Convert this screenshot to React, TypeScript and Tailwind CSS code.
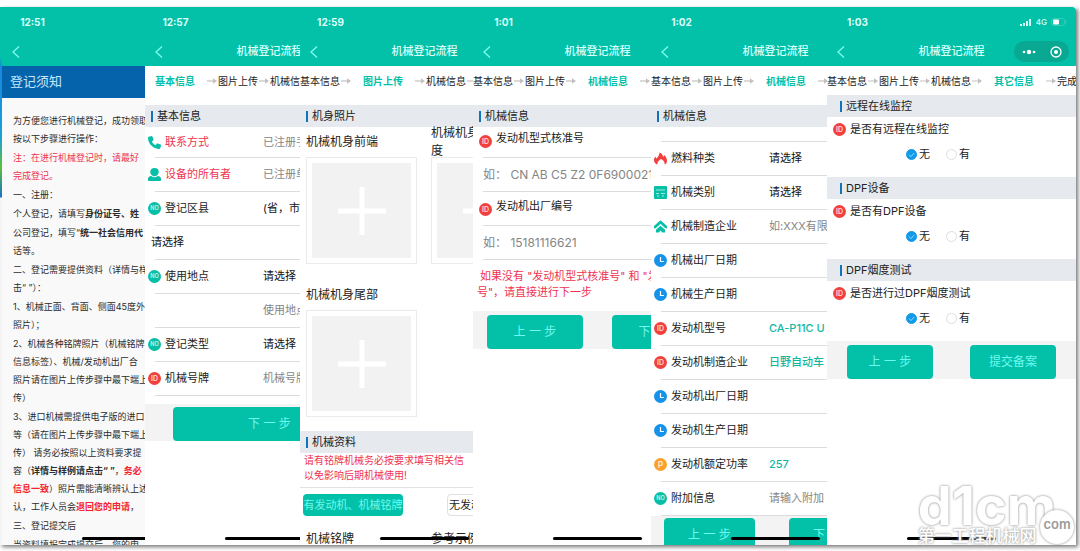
import React, { useId } from "react";

type IconName =
  | "phone"
  | "user"
  | "no"
  | "id"
  | "power"
  | "fire"
  | "card"
  | "house"
  | "clock";

const Badge = ({ fill, text, size }: { fill: string; text: string; size: number }) => (
  <>
    <circle cx="13" cy="13" r="13" fill={fill} />
    <text
      x="13"
      y={13 + size * 0.36}
      fontSize={size}
      fontWeight="600"
      textAnchor="middle"
      fill="#fff"
      fillOpacity="0.8"
    >
      {text}
    </text>
  </>
);

const Icon = ({ name }: { name: IconName }) => (
  <svg viewBox="0 0 26 26" className="size-[13px] shrink-0" aria-hidden="true">
    {name === "no" && <Badge fill="#06bfa6" text="NO" size={11} />}
    {name === "id" && <Badge fill="#f2403f" text="ID" size={14} />}
    {name === "power" && <Badge fill="#f9a12b" text="P" size={17} />}
    {name === "clock" && (
      <>
        <circle cx="13" cy="13" r="13" fill="#1593ea" />
        <path d="M13 6v9h7" fill="none" stroke="#fff" strokeWidth="2.4" />
      </>
    )}
    {name === "phone" && (
      <path
        d="M2 1.500 7 0c1 0 1.600.4 2 1.300l2 5.200c.3.900 0 1.700-.7 2.300L7.800 11c1.700 3.500 3.800 5.600 7.300 7.300l2.300-2.600c.6-.7 1.400-1 2.300-.6l5.200 2c.9.4 1.300 1 1.100 2l-1.300 5c-.2 1-1 1.700-2 1.700C10.500 25.800 0 15.500 0 3.500c0-1 .9-1.800 2-2Z"
        fill="#06bfa6"
      />
    )}
    {name === "user" && (
      <>
        <path
          d="M13 0c5.500 0 8.500 3 8.500 7.500S18 16.500 13 16.500 4.500 12 4.500 7.500 7.500 0 13 0Z"
          fill="#06bfa6"
        />
        <path
          d="M6.500 16c4 3.500 9 3.500 13 0 4 .5 6.500 2.500 6.500 6V24c0 1-.8 2-2 2H2c-1.200 0-2-1-2-2v-2c0-3.500 2.500-5.500 6.500-6Z"
          fill="#06bfa6"
        />
      </>
    )}
    {name === "fire" && (
      <path
        d="M11 1c5 2 7 5 7 9 1.500-1 2-2 2-4 4 3 6 8 6 12 0 4-2 6-5 7 1-4-1-8-7-11-5 3-8 7-7 11-4-1-7-4-7-9 0-3 1.500-5 3-7 .5 2 1 3 2.500 4C8 9 11 6 11 1Z"
        fill="#f2403f"
      />
    )}
    {name === "card" && (
      <>
        <rect width="26" height="26" rx="2" fill="#06bfa6" />
        <path
          d="M4 8h18M4 15h6M14 15h8M6 20h4M16 20h4"
          stroke="#a5f5e8"
          strokeWidth="1.800"
        />
      </>
    )}
    {name === "house" && (
      <>
        <path
          d="M2 14 13 4l11 10"
          fill="none"
          stroke="#06bfa6"
          strokeWidth="5.500"
          strokeLinejoin="round"
          strokeLinecap="round"
        />
        <path d="m4 19.500 9-8 9 8V25h-5.500L13 21l-3.500 4H4Z" fill="#06bfa6" />
      </>
    )}
  </svg>
);

const Capsule = () => (
  <div className="flex h-[21px] w-[55px] items-center justify-between rounded-full bg-[#08a892] pr-[7px] pl-2">
    <svg viewBox="0 0 14 6" className="h-[6px] w-[14px]" aria-hidden="true">
      <circle cx="2" cy="3" r="1.300" fill="#fff" />
      <circle cx="7" cy="3" r="2.200" fill="#fff" />
      <circle cx="12" cy="3" r="1.300" fill="#fff" />
    </svg>
    <svg viewBox="0 0 12 12" className="size-[12px]" aria-hidden="true">
      <circle cx="6" cy="6" r="5" fill="none" stroke="#fff" strokeWidth="1.300" />
      <circle cx="6" cy="6" r="2" fill="#fff" />
    </svg>
  </div>
);

const Signal = () => (
  <div className="flex items-center gap-1 text-[8px] font-medium text-[#d5fff7]">
    <svg viewBox="0 0 12 7" className="h-[7px] w-[12px]" fill="#d5fff7" aria-hidden="true">
      <rect x="0" y="5" width="2" height="2" />
      <rect x="3" y="4" width="2" height="3" />
      <rect x="6" y="2" width="2" height="5" />
      <rect x="9" y="0" width="2" height="7" />
    </svg>
    <span>4G</span>
    <svg viewBox="0 0 16 8" className="h-[8px] w-[16px]" aria-hidden="true">
      <rect x="0.500" y="0.500" width="13" height="7" rx="2" fill="none" stroke="#2fcfb9" />
      <rect x="2" y="1.500" width="6" height="5" rx="1" fill="#fff" />
      <rect x="14.500" y="2.500" width="1" height="3" fill="#2fcfb9" />
    </svg>
  </div>
);

type PhoneProps = {
  time: string;
  title?: string;
  last?: boolean;
  children: React.ReactNode;
};

const Phone = ({ time, title, last, children }: PhoneProps) => (
  <section
    className={`relative min-w-0 overflow-hidden bg-white ${last ? "rounded-tr-sm" : ""}`}
  >
    <div className="relative h-full min-w-[249px]">
      <header className="bg-[#03c1a9]">
        <div className="flex h-[30px] items-center justify-between pr-[9px] pl-[17px]">
          <time className="w-[27px] text-center text-[10px] font-bold text-[#dcfff9]">
            {time}
          </time>
          {last && <Signal />}
        </div>
        <div className="grid h-[29px] grid-cols-[1fr_auto_1fr] items-center px-[7px]">
          <button type="button" aria-label="返回" className="justify-self-start pl-[3px]">
            <svg viewBox="0 0 8 12" className="h-[12px] w-[8px]" aria-hidden="true">
              <path d="M7 .5 1 6l6 5.500" fill="none" stroke="#7ffdf0" strokeWidth="1.300" />
            </svg>
          </button>
          <h1 className="text-[11px] font-medium text-[#dcfff9]">{title}</h1>
          <div className="justify-self-end">{last && <Capsule />}</div>
        </div>
      </header>
      {children}
    </div>
    <div className="absolute bottom-[5px] left-[80px] h-[3px] w-[89px] rounded-full bg-black" />
  </section>
);

const StepArrow = () => (
  <svg viewBox="0 0 12 8" className="h-[8px] w-[12px] shrink-0" aria-hidden="true">
    <path d="M1 4h9" stroke="#c4c0c0" strokeWidth="1.200" />
    <path d="M7 1.200 11 4 7 6.800Z" fill="#c4c0c0" />
  </svg>
);

type StepsProps = { steps: string[]; active: number; short?: boolean };

const Steps = ({ steps, active, short }: StepsProps) => (
  <ol
    className={`flex items-start overflow-hidden pt-[7px] text-[10px] leading-4 whitespace-nowrap text-[#222] ${
      short ? "h-[29px]" : "h-[39px]"
    } ${active === 0 ? "pl-[10px]" : ""}`}
  >
    {steps.map((s, i) => (
      <li key={s} className="flex shrink-0 items-center">
        <span
          className={
            i === active
              ? `font-bold text-[#03c1a9] ${i === 0 ? "pr-[11px]" : "px-[11px]"}`
              : ""
          }
        >
          {s}
        </span>
        {s !== "完成" && <StepArrow />}
      </li>
    ))}
  </ol>
);

const SectionTitle = ({ children, wide }: { children: React.ReactNode; wide?: boolean }) => (
  <h2
    className={`flex h-[22px] items-center gap-1 bg-[#e6e9ed] text-[11px] text-[#222] ${
      wide ? "pl-[13px]" : "pl-[6px]"
    }`}
  >
    <span className="h-[11px] w-[2px] bg-[#1274b8]" />
    {children}
  </h2>
);

const Line = () => <hr className="ml-[10px] border-[#dcdcdc]" />;

type FieldProps = {
  icon?: IconName;
  label?: string;
  red?: boolean;
  option?: string;
  value?: string;
  placeholder?: string;
  first?: boolean;
  name?: string;
};

const Field = ({ icon, label, red, option, value, placeholder, first, name }: FieldProps) => {
  const id = useId();
  return (
    <>
      <div className={`flex items-center pl-[3px] text-[11px] ${first ? "h-[30px]" : "h-[33px]"}`}>
        <div className="flex w-[115px] shrink-0 items-center gap-1">
          {icon && <Icon name={icon} />}
          {label && (
            <label htmlFor={id} className={red ? "text-[#ee3350]" : "text-[#222]"}>
              {label}
            </label>
          )}
        </div>
        {option ? (
          <select id={id} className="min-w-0 flex-1 appearance-none text-[#111]">
            <option>{option}</option>
          </select>
        ) : (
          <input
            id={id}
            aria-label={label ? undefined : name}
            defaultValue={value}
            placeholder={placeholder}
            className="w-full min-w-0 flex-1 font-medium text-[#12b7a2] placeholder:font-normal placeholder:text-[#858585]"
          />
        )}
      </div>
      <Line />
    </>
  );
};

type LongFieldProps = { label: string; placeholder: string; first?: boolean };

const LongField = ({ label, placeholder, first }: LongFieldProps) => {
  const id = useId();
  return (
    <>
      <div className={`flex gap-1 pl-[6px] ${first ? "h-[30px] pt-[3px]" : "h-[33px] pt-[6px]"}`}>
        <div className="pt-[5px]">
          <Icon name="id" />
        </div>
        <label htmlFor={id} className="text-[11px] leading-4 text-[#222]">
          {label}
        </label>
      </div>
      <Line />
      <input
        id={id}
        placeholder={placeholder}
        className="block h-[33px] w-full pl-[10px] text-[12px] placeholder:text-[#858585]"
      />
      <Line />
    </>
  );
};

const Btn = ({ children, className = "" }: { children: React.ReactNode; className?: string }) => (
  <button
    type="button"
    className={`h-[34px] shrink-0 rounded bg-[#03c1a9] text-[12px] text-[#6ff8ee] ${className}`}
  >
    {children}
  </button>
);

const UploadTile = ({ label }: { label: string }) => (
  <div className="w-[111px] shrink-0">
    <div className="flex h-[30px] items-center text-[12px] leading-[18px] whitespace-pre-line text-[#222]">
      <span>{label}</span>
    </div>
    <button
      type="button"
      aria-label={label}
      className="block h-[107px] w-full border border-[#ebebeb] p-[5px]"
    >
      <span className="flex h-full items-center justify-center bg-[#f2f2f2]">
        <svg viewBox="0 0 48 48" className="size-12" aria-hidden="true">
          <path d="M24 0v48M0 24h48" stroke="#fff" strokeWidth="5" />
        </svg>
      </span>
    </button>
  </div>
);

const RadioOption = ({ name, label, checked }: { name: string; label: string; checked?: boolean }) => (
  <label className="flex items-center gap-[2px]">
    <span className="relative size-[11px]">
      <input
        type="radio"
        name={name}
        defaultChecked={checked}
        className="peer block size-[11px] appearance-none rounded-full border border-[#dedede] checked:border-[#129ae6] checked:bg-[#129ae6]"
      />
      <svg
        viewBox="0 0 11 11"
        className="pointer-events-none absolute inset-0 hidden size-[11px] peer-checked:block"
        aria-hidden="true"
      >
        <path d="m3 5.600 2 2 3.200-3.600" fill="none" stroke="#8fd8ff" />
      </svg>
    </span>
    {label}
  </label>
);

const Question = ({ title, question }: { title: string; question: string }) => {
  const id = useId();
  return (
    <>
      <SectionTitle wide>{title}</SectionTitle>
      <fieldset className="pb-[10px] text-[11px] text-[#222]">
        <legend className="flex h-[25px] items-center gap-1 pl-[6px]">
          <Icon name="id" />
          {question}
        </legend>
        <div className="flex h-[25px] items-center gap-4 pl-[79px]">
          <RadioOption name={id} label="无" checked />
          <RadioOption name={id} label="有" />
        </div>
      </fieldset>
    </>
  );
};

const Notice = () => (
  <Phone time="12:51">
    <h2 className="flex h-8 items-center bg-[#0563ab] pl-2 text-[13px] text-[#c5e9ff]">登记须知</h2>
    <div className="flex h-full flex-col gap-px bg-[#f9f9f9] pt-[14px] pl-[11px] text-[9px] leading-[18px] whitespace-nowrap text-[#2b2b2b]">
      <p>
        为方便您进行机械登记，成功领取
        <br />
        按以下步骤进行操作：
      </p>
      <p className="text-[#ee3350]">
        注：在进行机械登记时，请最好
        <br />
        完成登记。
      </p>
      <p>一、注册：</p>
      <p>
        个人登记，请填写<b>身份证号、姓</b>
      </p>
      <p>
        公司登记，填写“<b>统一社会信用代</b>
        <br />
        话等。
      </p>
      <p>
        二、登记需要提供资料（详情与样
        <br />
        击“ ”）：
      </p>
      <p>
        1、机械正面、背面、侧面45度外
        <br />
        照片）；
      </p>
      <p>
        2、机械各种铭牌照片（机械铭牌
        <br />
        信息标签）、机械/发动机出厂合
        <br />
        照片请在图片上传步骤中最下端上
        <br />
        传）
      </p>
      <p>
        3、进口机械需提供电子版的进口
        <br />
        等（请在图片上传步骤中最下端上
        <br />
        传） 请务必按照以上资料要求提
        <br />
        容（<b>详情与样例请点击“ ”</b>，<b className="text-[#f5232f]">务必</b>
        <br />
        <b className="text-[#f5232f]">信息一致</b>）照片需能清晰辨认上述
        <br />
        认，工作人员会<b className="text-[#f5232f]">退回您的申请</b>，
      </p>
      <p>三、登记提交后</p>
      <p>当资料填报完成提交后，您的申</p>
    </div>
  </Phone>
);

const BasicInfo = () => (
  <Phone time="12:57" title="机械登记流程">
    <Steps steps={["基本信息", "图片上传", "机械信息"]} active={0} />
    <SectionTitle>基本信息</SectionTitle>
    <Field first icon="phone" label="联系方式" red placeholder="已注册手机" />
    <Field icon="user" label="设备的所有者" red placeholder="已注册单位" />
    <Field icon="no" label="登记区县" option="(省，市" />
    <div className="flex h-[33px] items-center pl-[6px] text-[11px]">
      <select aria-label="区县" className="appearance-none text-[#111]">
        <option>请选择</option>
      </select>
    </div>
    <Line />
    <Field icon="no" label="使用地点" option="请选择" />
    <Field name="使用地点" placeholder="使用地点" />
    <Field icon="no" label="登记类型" option="请选择" />
    <Field icon="id" label="机械号牌" placeholder="机械号牌" />
    <div className="mt-2 flex justify-center bg-[#f3f3f3] px-[28px] pt-[3px]">
      <Btn className="w-full">下 一 步</Btn>
    </div>
  </Phone>
);

const Photos = () => (
  <Phone time="12:59" title="机械登记流程">
    <Steps steps={["基本信息", "图片上传", "机械信息"]} active={1} />
    <SectionTitle>机身照片</SectionTitle>
    <div className="flex gap-[14px] pl-[6px]">
      <UploadTile label="机械机身前端" />
      <UploadTile label={"机械机身45\n度"} />
    </div>
    <div className="mt-4 mb-[14px] pl-[6px]">
      <UploadTile label="机械机身尾部" />
    </div>
    <SectionTitle>机械资料</SectionTitle>
    <p className="pl-1 text-[10px] leading-[15px] whitespace-nowrap text-[#ee3350]">
      请有铭牌机械务必按要求填写相关信
      <br />
      以免影响后期机械使用!
    </p>
    <hr className="mt-1 border-[#e2e2e2]" />
    <div className="flex gap-[44px] pt-[6px] pl-[3px] text-[11px] whitespace-nowrap">
      <button
        type="button"
        className="h-[22px] w-[100px] shrink-0 rounded bg-[#03c1a9] text-[#6ff8ee]"
      >
        有发动机、机械铭牌
      </button>
      <button
        type="button"
        className="h-[22px] w-[100px] shrink-0 rounded border border-[#e0e0e0] pl-px text-left text-[#222]"
      >
        无发动机
      </button>
    </div>
    <div className="flex gap-[14px] pt-[14px] pl-[6px] text-[12px] leading-[18px] text-[#222]">
      <span className="w-[111px]">机械铭牌</span>
      <span>参考示例</span>
    </div>
  </Phone>
);

const EngineCodes = () => (
  <Phone time="1:01" title="机械登记流程">
    <Steps steps={["基本信息", "图片上传", "机械信息"]} active={2} />
    <SectionTitle>机械信息</SectionTitle>
    <LongField first label="发动机型式核准号" placeholder="如： CN AB C5 Z2 0F69000210" />
    <LongField label="发动机出厂编号" placeholder="如： 15181116621" />
    <p className="pt-2 pb-[11px] pl-1 text-[11px] leading-4 whitespace-nowrap text-[#ee3350]">
      &nbsp;如果没有 "发动机型式核准号" 和 "发
      <br />
      号"，请直接进行下一步
    </p>
    <div className="flex justify-between bg-[#f3f3f3] px-[14px] pt-1">
      <Btn className="w-[96px]">上 一 步</Btn>
      <Btn className="w-[96px]">下 一 步</Btn>
    </div>
  </Phone>
);

const MachineInfo = () => (
  <Phone time="1:02" title="机械登记流程">
    <Steps steps={["基本信息", "图片上传", "机械信息"]} active={2} />
    <SectionTitle>机械信息</SectionTitle>
    <div className="pt-[14px]">
      <Line />
    </div>
    <Field icon="fire" label="燃料种类" option="请选择" />
    <Field icon="card" label="机械类别" option="请选择" />
    <Field icon="house" label="机械制造企业" placeholder="如:XXX有限" />
    <Field icon="clock" label="机械出厂日期" />
    <Field icon="clock" label="机械生产日期" />
    <Field icon="id" label="发动机型号" value="CA-P11C U" />
    <Field icon="id" label="发动机制造企业" value="日野自动车" />
    <Field icon="clock" label="发动机出厂日期" />
    <Field icon="clock" label="发动机生产日期" />
    <Field icon="power" label="发动机额定功率" value="257" />
    <Field icon="no" label="附加信息" placeholder="请输入附加" />
    <div className="flex gap-[34px] bg-[#f3f3f3] px-[13px] pt-[2px]">
      <Btn className="w-[91px]">上 一 步</Btn>
      <Btn className="w-[91px]">下 一 步</Btn>
    </div>
  </Phone>
);

const OtherInfo = () => (
  <Phone time="1:03" title="机械登记流程" last>
    <Steps
      steps={["基本信息", "图片上传", "机械信息", "其它信息", "完成"]}
      active={3}
      short
    />
    <Question title="远程在线监控" question="是否有远程在线监控" />
    <Question title="DPF设备" question="是否有DPF设备" />
    <Question title="DPF烟度测试" question="是否进行过DPF烟度测试" />
    <div className="flex justify-between bg-[#f3f3f3] px-5 pt-1">
      <Btn className="w-[86px]">上 一 步</Btn>
      <Btn className="w-[86px]">提交备案</Btn>
    </div>
  </Phone>
);

const Watermark = () => (
  <div className="pointer-events-none absolute right-[6px] bottom-[5px] flex items-end text-white">
    <div className="-mr-4 flex flex-col items-start [text-shadow:0_0_2px_#a0a0a0,0_0_3px_#b5b5b5]">
      <span className="text-[54px] leading-[42px] font-bold">d1cm</span>
      <span className="text-[17px] leading-[19px] font-medium">第一工程机械网</span>
    </div>
    <span className="mb-[2px] flex size-[34px] items-center justify-center rounded-full bg-white pb-1 text-[13px] font-semibold text-[#9a9a9a] shadow-[0_0_3px_#8a8a8a]">
      com
    </span>
  </div>
);

const App = () => {
  return (
    <div className="relative h-screen overflow-hidden bg-white pt-[7px] pr-[4px] pb-[6px] font-[Inter,'Noto_Sans_CJK_SC',sans-serif]">
      <main className="grid h-full grid-cols-[2px_143fr_155fr_173fr_178fr_176fr_249fr] grid-rows-[minmax(0,1fr)] shadow-[2px_2px_4px_#777]">
        <div className="bg-[linear-gradient(#03c1a9_50px,#1b86e0_60px,#18a0d8_130px,#5cc03c_160px,#1673c4_190px,#f4f4f4_191px)]" />
        <Notice />
        <BasicInfo />
        <Photos />
        <EngineCodes />
        <MachineInfo />
        <OtherInfo />
      </main>
      <Watermark />
    </div>
  );
};

export default App;
